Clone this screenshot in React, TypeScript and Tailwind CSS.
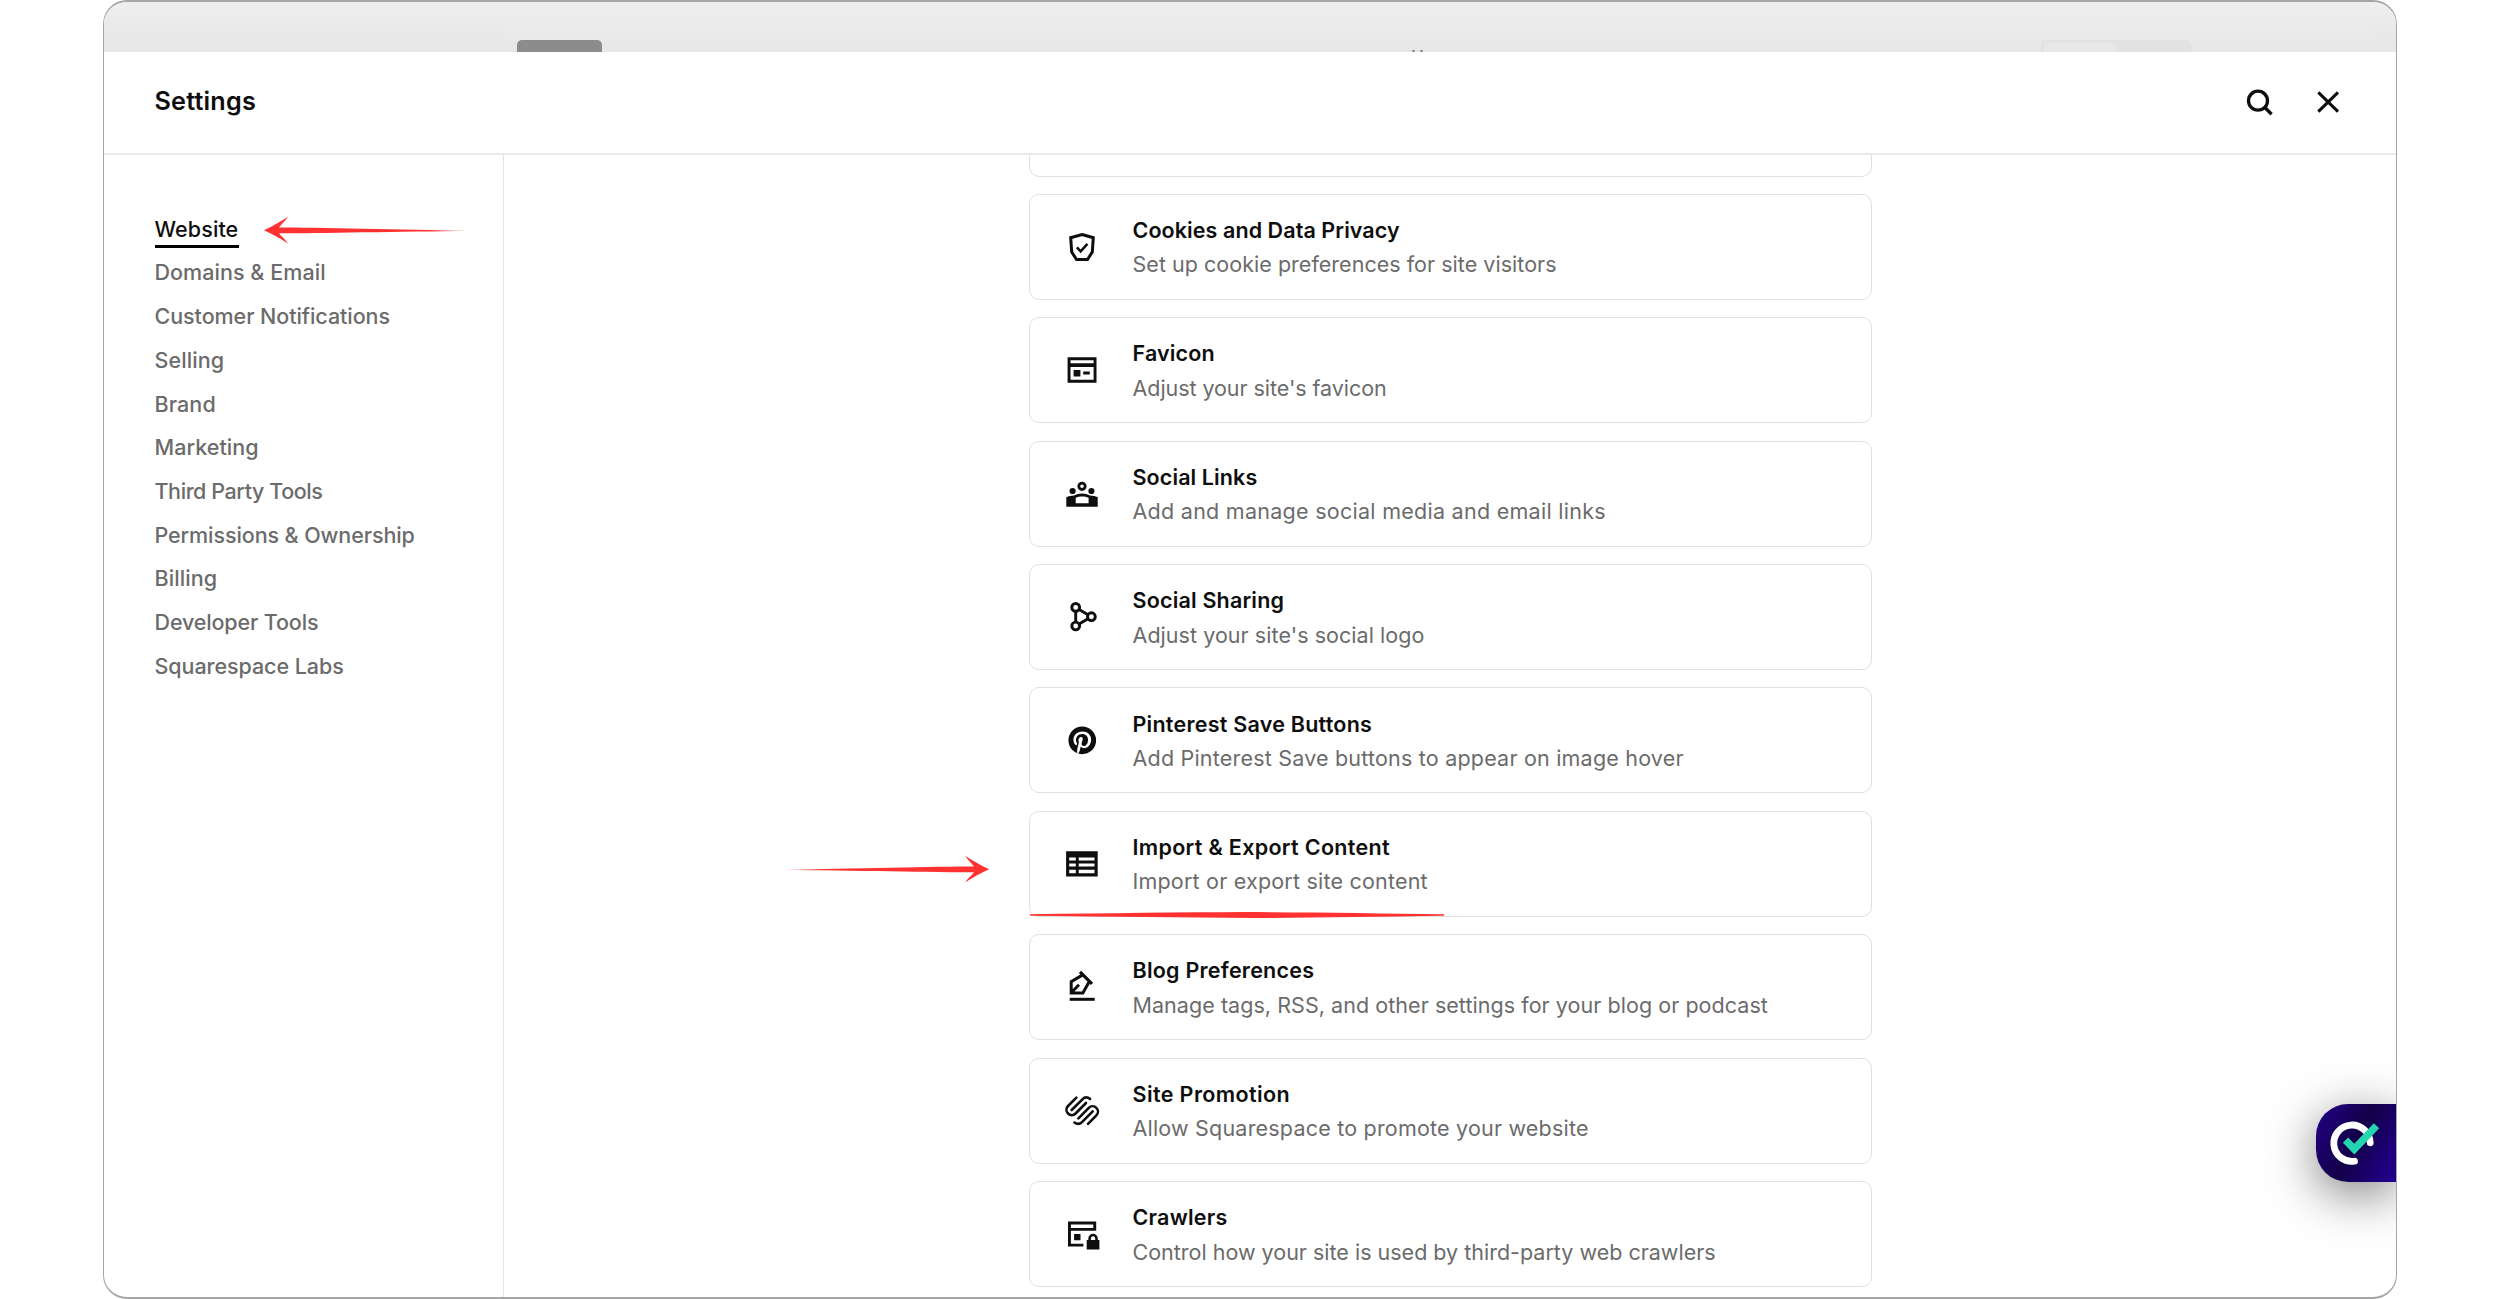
import React from "react";
import { FaPinterest } from "react-icons/fa";

type NavItem = { label: string; tracking: string; active?: boolean };

const NAV: NavItem[] = [
  { label: "Website", tracking: "tracking-[0.1px]", active: true },
  { label: "Domains & Email", tracking: "tracking-[0.05px]" },
  { label: "Customer Notifications", tracking: "tracking-[-0.06px]" },
  { label: "Selling", tracking: "tracking-[0.1px]" },
  { label: "Brand", tracking: "tracking-[0.1px]" },
  { label: "Marketing", tracking: "tracking-[0.05px]" },
  { label: "Third Party Tools", tracking: "tracking-[-0.42px]" },
  { label: "Permissions & Ownership", tracking: "tracking-[-0.09px]" },
  { label: "Billing", tracking: "tracking-[0.1px]" },
  { label: "Developer Tools", tracking: "tracking-[-0.14px]" },
  { label: "Squarespace Labs", tracking: "tracking-[-0.06px]" },
];

function Glyph({ children }: { children: React.ReactNode }) {
  return (
    <svg viewBox="0 0 36 36" className="size-9 overflow-visible" fill="none" stroke="none">
      {children}
    </svg>
  );
}

const INK = "#0e0e0e";

const ShieldIcon = () => (
  <Glyph>
    <path d="M18 5.5 29.3 8.7 28.3 23 23.5 30.5h-11L7.7 23 6.7 8.7Z" stroke={INK} strokeWidth="3" />
    <path d="M12.9 18.3 16.7 22.3 23.4 14.8" stroke={INK} strokeWidth="2.6" />
  </Glyph>
);

const WindowIcon = () => (
  <Glyph>
    <path
      fill={INK}
      fillRule="evenodd"
      d="M3.6 5.3h28.9v25.4H3.6ZM6.5 8.2v3.1h23.1V8.2ZM6.5 15v12.8h23.1V15Z"
    />
    <path fill={INK} d="M9.6 17.9h6.8v6.6H9.6ZM19.2 19.6h6.6v3h-6.6Z" />
  </Glyph>
);

const PeopleIcon = () => (
  <Glyph>
    <circle cx="18" cy="10.3" r="3.2" stroke={INK} strokeWidth="2.8" />
    <circle cx="8.6" cy="15" r="3.1" fill={INK} />
    <circle cx="27.4" cy="15" r="3.1" fill={INK} />
    <path
      fill={INK}
      fillRule="evenodd"
      d="M2.3 30.7V21.3C4.5 20.2 7 19.7 10 19.6 12.4 18.2 15 17.5 18 17.5s5.6.7 8 2.1c3 .1 5.5.6 7.7 1.7v9.4ZM11.7 27.3h12.9v-5.500c-4-1.9-8.9-1.9-12.900 0Z"
    />
  </Glyph>
);

const ShareIcon = () => (
  <Glyph>
    <g stroke={INK} strokeWidth="2.9">
      <circle cx="11.7" cy="8.4" r="3.9" />
      <circle cx="11.7" cy="27" r="3.9" />
      <circle cx="27.4" cy="17.7" r="3.9" />
      <path d="M11.7 12.4V23M15.1 10.5 24 15.7M15.1 24.9 24 19.7" />
    </g>
  </Glyph>
);

const PinterestIcon = () => (
  <span className="flex size-9 items-center justify-center">
    <FaPinterest size={28.6} color={INK} />
  </span>
);

const TableIcon = () => (
  <Glyph>
    <path
      fill={INK}
      fillRule="evenodd"
      d="M2.1 5.3h31.6v25.3H2.1ZM5.2 11.5v3.1h6.6v-3.1ZM14.7 11.5v3.1h15.8v-3.1ZM5.2 17.5v3.1h6.6v-3.1ZM14.7 17.5v3.1h15.8v-3.1ZM5.2 23.8v3.4h6.6v-3.4ZM14.7 23.8v3.4h15.8v-3.4Z"
    />
  </Glyph>
);

const PenIcon = () => (
  <Glyph>
    <g stroke={INK} strokeWidth="3">
      <path d="M16 2.9 28 14.9" strokeWidth="3.200" />
      <path d="M18.3 6.1 7.2 12.6v11.3h11.700L24.900 13.2M7.200 23.800 15 15.800" />
      <path d="M5.700 30.300h25" />
    </g>
  </Glyph>
);

const PromoIcon = () => (
  <Glyph>
    <g stroke={INK} strokeWidth="2.600" strokeLinecap="round">
      <path d="M12.400 4.600 4 13A5.300 5.300 0 0 0 11.600 20.500L22 10" />
      <path d="M7.700 17 18.400 6.300C20.400 4.300 23.500 4 26 5.900" />
      <path d="M24 30.800 32.400 22.400A5.300 5.300 0 0 0 24.800 14.900L14.400 25.400" />
      <path d="M28.700 18.400 18 29.100C16 31.100 12.900 31.400 10.400 29.500" />
    </g>
  </Glyph>
);

const CrawlerIcon = () => (
  <Glyph>
    <path
      fill={INK}
      fillRule="evenodd"
      d="M4 5.5h28.2v9.200H6.900v13h12.500v2.900H4ZM6.900 8.400v3.500h22.400V8.400Z"
    />
    <path fill={INK} d="M10.100 18h6.400v6.300h-6.400ZM22.700 23.900h12.700v9.700H22.700Z" />
    <path d="M25.600 24.500v-2a3.400 3.400 0 0 1 6.900 0v2" stroke={INK} strokeWidth="2.600" />
  </Glyph>
);

type Card = { title: string; tt: string; desc: string; dt: string; icon: () => React.ReactElement; marked?: boolean };

const CARDS: Card[] = [
  { title: "Cookies and Data Privacy", tt: "tracking-[0.08px]", desc: "Set up cookie preferences for site visitors", dt: "tracking-[0.03px]", icon: ShieldIcon },
  { title: "Favicon", tt: "tracking-[0.15px]", desc: "Adjust your site's favicon", dt: "tracking-[-0.06px]", icon: WindowIcon },
  { title: "Social Links", tt: "tracking-[0.1px]", desc: "Add and manage social media and email links", dt: "tracking-[0.27px]", icon: PeopleIcon },
  { title: "Social Sharing", tt: "tracking-[0.18px]", desc: "Adjust your site's social logo", dt: "tracking-[0.05px]", icon: ShareIcon },
  { title: "Pinterest Save Buttons", tt: "tracking-[0.24px]", desc: "Add Pinterest Save buttons to appear on image hover", dt: "tracking-[0.2px]", icon: PinterestIcon },
  { title: "Import & Export Content", tt: "tracking-[0.32px]", desc: "Import or export site content", dt: "tracking-[0.2px]", icon: TableIcon, marked: true },
  { title: "Blog Preferences", tt: "tracking-[0.24px]", desc: "Manage tags, RSS, and other settings for your blog or podcast", dt: "tracking-[0.05px]", icon: PenIcon },
  { title: "Site Promotion", tt: "tracking-[0.4px]", desc: "Allow Squarespace to promote your website", dt: "tracking-[0.2px]", icon: PromoIcon },
  { title: "Crawlers", tt: "tracking-[0.22px]", desc: "Control how your site is used by third-party web crawlers", dt: "tracking-[0px]", icon: CrawlerIcon },
];

function Backdrop() {
  return (
    <div className="relative h-[49.5px] shrink-0 overflow-hidden bg-linear-to-b from-[#eeeeee] to-[#e6e6e6]">
      <div className="absolute top-[23px] left-[399px] flex h-10 w-[1869px] justify-between bg-linear-to-b from-[#ebebeb] to-[#e5e5e5] pt-[15px] pr-[181px] pl-[14px]">
        <div className="h-8 w-[85px] rounded-[5px] bg-[#8c8c8c]" />
        <div className="flex h-8 w-[150px] rounded-[5px] bg-[#e2e2e2] pt-[3px] pl-[3px]">
          <div className="h-8 w-[72px] rounded-[3px] bg-[#e8e8e8]" />
        </div>
      </div>
      <div className="absolute top-[48px] left-[1307.5px] flex gap-[5px]">
        <div className="h-2 w-[3px] bg-[#9a9a9a]" />
        <div className="h-2 w-[3px] bg-[#9a9a9a]" />
      </div>
    </div>
  );
}

function Header() {
  return (
    <header className="flex h-[103.5px] shrink-0 items-center justify-between border-b-2 border-[#e9e9e9] pr-[52px] pl-[50.5px]">
      <h1 className="text-[25.2px] font-semibold tracking-[0.2px] text-[#0e0e0e]">Settings</h1>
      <div className="flex gap-[37px]">
        <svg viewBox="0 0 32 32" className="size-8 overflow-visible" fill="none" stroke={INK} strokeWidth="3.3">
          <circle cx="15" cy="14.7" r="9.5" />
          <path d="M21.8 21.5 28.6 28.2" />
        </svg>
        <svg viewBox="0 0 32 32" className="size-8 overflow-visible" fill="none" stroke={INK} strokeWidth="3.1">
          <path d="M6.3 6.4 26 25.6M26 6.4 6.3 25.6" />
        </svg>
      </div>
    </header>
  );
}

function Sidebar() {
  return (
    <nav className="flex w-[400px] shrink-0 flex-col border-r-[1.5px] border-[#e4e4e4] pt-[52px] pl-[50.5px]">
      {NAV.map((n) => (
        <div key={n.label} className="flex h-[43.73px] shrink-0 items-center text-[21.5px] font-medium">
          {n.active ? (
            <span className={`relative text-[#0e0e0e] ${n.tracking}`}>
              {n.label}
              <span className="absolute top-[32px] left-0 h-[3.5px] w-[84px] bg-black" />
              <svg viewBox="0 0 204 28" className="absolute top-[3px] left-[109px] h-7 w-[204px]">
                <path
                  fill="#ff3131"
                  d="M0 14.2C8 10.5 17 5.5 24 0.8 21 5 17.5 8.5 15 11.5 50 11.5 140 13.5 204 15 140 15.6 50 17.3 15 17.3 17.5 20.5 21 23.5 24 27.5 17 22.5 8 18 0 14.2Z"
                />
              </svg>
            </span>
          ) : (
            <span className={`whitespace-nowrap text-[#6b6b6b] ${n.tracking}`}>{n.label}</span>
          )}
        </div>
      ))}
    </nav>
  );
}

function SettingCard({ card }: { card: Card }) {
  const Icon = card.icon;
  return (
    <div className="relative flex h-[106px] shrink-0 items-center rounded-[10px] border-[1.5px] border-[#e0e0e0]">
      <div className="ml-[34px] w-[68.5px]">
        <Icon />
      </div>
      <div className="pt-px text-[21.5px] leading-[34.4px] whitespace-nowrap">
        <div className={`font-semibold text-[#0e0e0e] ${card.tt}`}>{card.title}</div>
        <div className={`text-[#6b6b6b] ${card.dt}`}>{card.desc}</div>
      </div>
      {card.marked && (
        <>
          <svg viewBox="0 0 204 28" className="absolute top-[43px] left-[-245.5px] h-7 w-[204px]">
            <path
              fill="#ff3131"
              d="M204 14.2C196 10.5 187 5.5 180 0.8 183 5 186.5 8.5 189 11.5 154 11.5 64 13.5 0 15 64 15.6 154 17.3 189 17.3 186.5 20.5 183 23.5 180 27.5 187 22.5 196 18 204 14.2Z"
            />
          </svg>
          <svg viewBox="0 0 414 6" className="absolute top-[100.5px] left-0 h-[6px] w-[414px]">
            <path fill="#ff3131" d="M0 2.2C80 1.2 150 0.3 215 0 280 0.3 350 1.2 414 2.3V3.7C350 4.7 280 5.7 225 6 150 5.500 80 4.500 0 3.700Z" />
          </svg>
        </>
      )}
    </div>
  );
}

function AccessWidget() {
  return (
    <div className="absolute top-[1101.5px] right-0 h-[78.5px] w-[80px] rounded-l-[32px] bg-[linear-gradient(118deg,#23008a_0%,#1c006c_22%,#130048_48%,#16005a_62%,#1f0080_85%,#210088_100%)] shadow-[0_12px_50px_rgba(0,0,0,0.5)]">
      <svg viewBox="0 0 80 78" className="size-full" fill="none">
        <path d="M38.5 57A18.2 18.2 0 1 1 54.2 38.5" stroke="#fff" strokeWidth="6.8" strokeLinecap="round" />
        <path d="M29.5 35.8 38.3 44.8 60.5 21.5" stroke="#25d4b0" strokeWidth="7.4" />
      </svg>
    </div>
  );
}

export default function App() {
  return (
    <div className="flex h-[1299px] w-[2500px] justify-center bg-white font-['Inter',sans-serif]">
      <div className="relative flex h-[1299px] w-[2294px] flex-col overflow-hidden rounded-[24px] border-x border-y-2 border-[#a6a6a6] bg-white">
        <Backdrop />
        <Header />
        <div className="flex min-h-0 flex-1">
          <Sidebar />
          <main className="flex flex-1 justify-center overflow-hidden pl-px">
            <div className="flex w-[843px] flex-col gap-[17.4px]">
              <div className="h-[21.5px] shrink-0 rounded-b-[10px] border-[1.5px] border-t-0 border-[#e0e0e0]" />
              {CARDS.map((c) => (
                <SettingCard key={c.title} card={c} />
              ))}
            </div>
          </main>
        </div>
        <AccessWidget />
      </div>
    </div>
  );
}
